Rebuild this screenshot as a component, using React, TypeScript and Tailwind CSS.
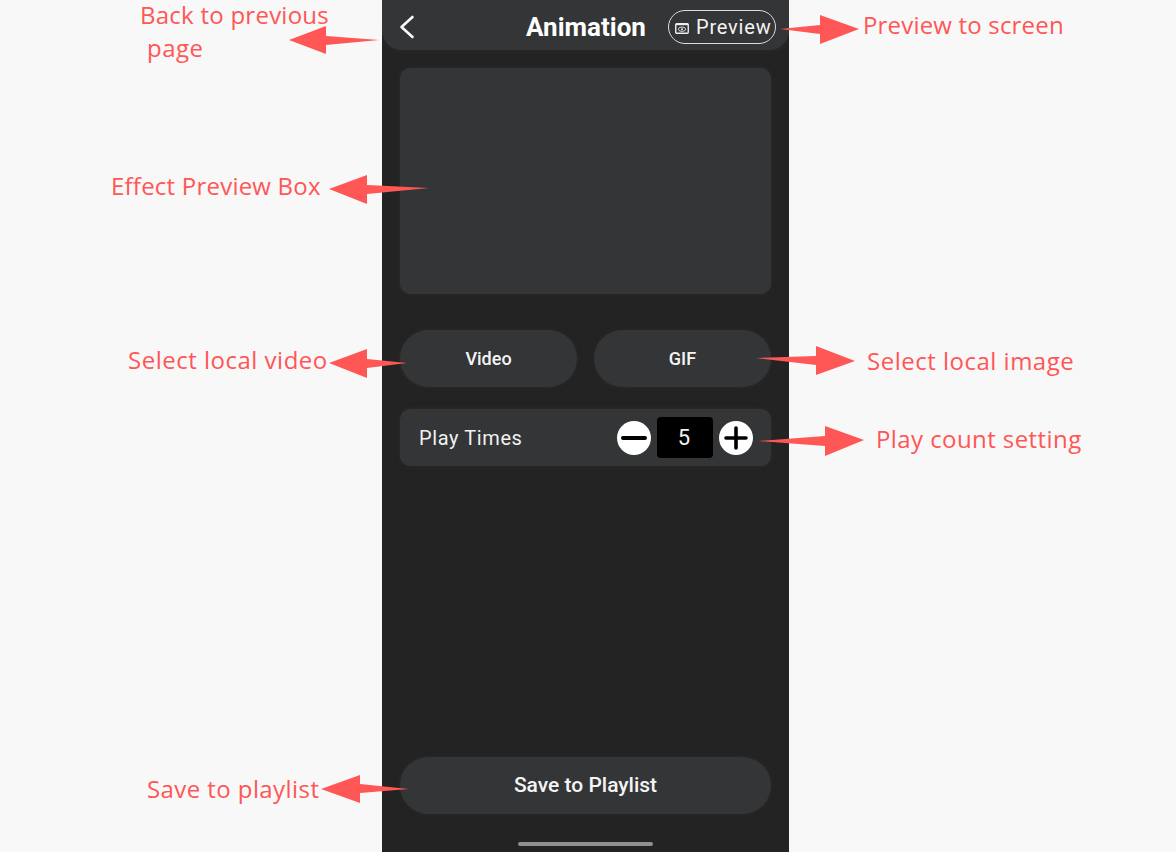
import React from 'react';

const labels = [
  { text: 'Back to previous', className: 'left-[140px] top-0 leading-[30px] tracking-[0.25px]' },
  { text: 'page', className: 'left-[147px] top-[32px] leading-[32px] tracking-[0.5px]' },
  { text: 'Preview to screen', className: 'left-[863px] top-[9px] leading-[32px] tracking-[0.18px]' },
  { text: 'Effect Preview Box', className: 'left-[111px] top-[170px] leading-[32px] tracking-[0.22px]' },
  { text: 'Select local video', className: 'left-[128px] top-[344px] leading-[32px] tracking-[0.5px]' },
  { text: 'Select local image', className: 'left-[867px] top-[345px] leading-[32px] tracking-[0.5px]' },
  { text: 'Play count setting', className: 'left-[876px] top-[423px] leading-[32px] tracking-[0.42px]' },
  { text: 'Save to playlist', className: 'left-[147px] top-[773px] leading-[32px] tracking-[0.42px]' },
];

const arrows = [
  '289,40 326,26 326,36 379,40 326,45 326,54',
  '859,29 820,15 820,25 780,29 820,34 820,44',
  '329,189 367,175 367,185 429,188 367,194 367,204',
  '329,363 367,349 367,359 407,363 367,368 367,378',
  '855,361 816,346 816,356 756,358 816,365 816,375',
  '864,440 825,426 825,436 759,441 825,446 825,456',
  '321,789 360,775 360,784 409,789 360,793 360,803',
];

const PillButton: React.FC<{ label: string; className: string }> = ({ label, className }) => (
  <button className={`flex items-center justify-center rounded-full bg-[#343537] font-medium text-[#f4f4f4] shadow-[0_0_5px_#2b2b2b] ${className}`}>
    {label}
  </button>
);

const App: React.FC = () => {
  return (
    <div className="relative h-[852px] w-[1176px] overflow-hidden bg-[#f8f8f8] font-['Roboto',sans-serif]">
      <div className="ml-[382px] flex h-[852px] w-[407px] flex-col overflow-hidden bg-[#232323]">
        <header className="flex h-[50px] shrink-0 items-center rounded-b-[20px] bg-[#343537] pl-[16px] pr-[13px] pt-[4px] shadow-[0_1px_5px_#2b2b2b]">
          <div className="flex flex-1 items-center">
            <svg width="20" height="28" viewBox="0 0 20 28" fill="none">
              <path d="M14.5 4 L3.5 14 L14.5 24" stroke="#fbfbfb" strokeWidth="2.6" strokeLinecap="round" strokeLinejoin="round" />
            </svg>
          </div>
          <h1 className="mr-[2px] text-[26px] font-bold leading-none text-white">Animation</h1>
          <div className="flex flex-1 justify-end">
            <div className="flex h-[34px] w-[108px] items-center gap-[7px] rounded-full border border-[#dcdcdc] pl-[6px]">
              <svg width="14" height="11" viewBox="0 0 14 11" fill="none" className="mt-[3px]">
                <rect x="0.75" y="0.75" width="12.5" height="9.5" rx="1" stroke="#eeeeee" strokeWidth="1.4" />
                <path d="M1 1.5 H13" stroke="#eeeeee" strokeWidth="1.4" />
                <ellipse cx="7" cy="6.2" rx="3.6" ry="2.2" stroke="#eeeeee" strokeWidth="0.9" />
                <circle cx="7" cy="6.2" r="1" fill="#eeeeee" />
              </svg>
              <span className="text-[20px] leading-none tracking-[0.8px] text-[#f4f4f4]">Preview</span>
            </div>
          </div>
        </header>

        <main className="flex flex-1 flex-col px-[18px]">
          <div className="mt-[18px] h-[226px] w-[371px] rounded-[10px] bg-[#343537] shadow-[0_0_5px_#2b2b2b]" />

          <div className="mt-[36px] flex justify-between">
            <PillButton label="Video" className="h-[57px] w-[177px] text-[18px]" />
            <PillButton label="GIF" className="h-[57px] w-[177px] text-[18px]" />
          </div>

          <div className="mt-[22px] flex h-[57px] w-[371px] items-center rounded-[10px] bg-[#343537] pl-[19px] shadow-[0_0_5px_#2b2b2b]">
            <span className="text-[20px] tracking-[0.6px] text-[#f1f1f1]">Play Times</span>
            <div className="ml-auto mr-[18px] flex items-center gap-[6px]">
              <button className="flex h-[34px] w-[34px] items-center justify-center rounded-full bg-white">
                <svg width="26" height="26" viewBox="0 0 26 26">
                  <path d="M2 13 H24" stroke="#000" strokeWidth="4" strokeLinecap="round" />
                </svg>
              </button>
              <div className="flex h-[41px] w-[56px] items-center justify-center rounded-[4px] bg-black pr-[2px] text-[22px] text-[#f4f4f4]">5</div>
              <button className="flex h-[34px] w-[34px] items-center justify-center rounded-full bg-white">
                <svg width="26" height="26" viewBox="0 0 26 26">
                  <path d="M3 13 H23 M13 3 V23" stroke="#000" strokeWidth="3.6" strokeLinecap="round" />
                </svg>
              </button>
            </div>
          </div>

          <PillButton label="Save to Playlist" className="mt-auto h-[57px] w-[371px] pt-[1px] text-[21px]" />
        </main>

        <div className="flex h-[38px] shrink-0 items-start justify-center pt-[28px]">
          <div className="h-[4px] w-[135px] rounded-full bg-[#909090]" />
        </div>
      </div>

      {labels.map((label) => (
        <span
          key={label.text}
          className={`absolute whitespace-nowrap font-['Open_Sans',sans-serif] text-[24px] text-[#ff5656] ${label.className}`}
        >
          {label.text}
        </span>
      ))}

      <svg className="absolute left-0 top-0" width="1176" height="852" fill="#ff5656">
        {arrows.map((points) => (
          <polygon key={points} points={points} />
        ))}
      </svg>
    </div>
  );
};

export default App;
